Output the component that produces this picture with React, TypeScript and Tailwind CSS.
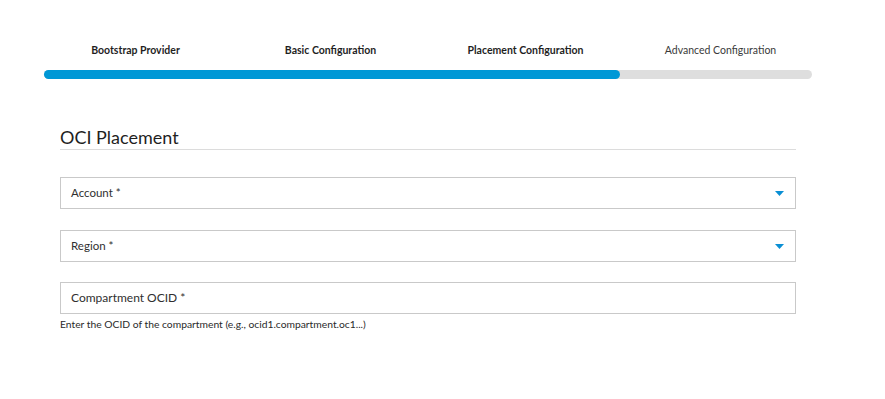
import { useState } from "react";

const steps = [
  { label: "Bootstrap Provider", done: true },
  { label: "Basic Configuration", done: true },
  { label: "Placement Configuration", done: true },
  { label: "Advanced Configuration", done: false },
];

function Caret() {
  return (
    <svg width="9" height="5" viewBox="0 0 9 5" className="shrink-0">
      <path d="M0 0h9L4.5 5z" fill="#0a8fd4" />
    </svg>
  );
}

function SelectField({ label }: { label: string }) {
  return (
    <button
      type="button"
      className="flex h-[32px] w-full items-center justify-between border border-[#c9c9c9] bg-white pl-[10px] pr-[11px] text-left text-[11.5px] text-[#2f2f2f]"
    >
      <span>{label}</span>
      <Caret />
    </button>
  );
}

export default function App() {
  const [ocid, setOcid] = useState("");

  return (
    <div className="min-h-[399px] w-[885px] bg-white font-['Lato','Liberation_Sans',sans-serif] text-[#2a2a2a]">
      <div className="w-[768px] pl-[44px] pt-[43px] box-content">
        <div className="ml-[-6px] grid w-[780px] grid-cols-4 text-center text-[10.5px] leading-[14px]">
          {steps.map((s) => (
            <div
              key={s.label}
              className={s.done ? "font-bold text-[#1f1f1f]" : "text-[#3a3a3a]"}
            >
              {s.label}
            </div>
          ))}
        </div>
        <div className="mt-[13px] h-[9px] w-full rounded-full bg-[#dedede]">
          <div className="h-full w-3/4 rounded-full bg-[#0098d6]" />
        </div>

        <div className="px-4">
          <h2 className="mt-[47px] border-b border-[#dcdcdc] pb-px text-[18px] leading-[22px] text-[#1f1f1f]">
            OCI Placement
          </h2>

          <div className="mt-[27px] flex flex-col gap-[21px]">
            <SelectField label="Account *" />
            <SelectField label="Region *" />
          </div>

          <div className="mt-[20px]">
            <label className="relative block">
              <input
                value={ocid}
                onChange={(e) => setOcid(e.target.value)}
                className="h-[32px] w-full border border-[#c9c9c9] bg-white px-[10px] text-[12px] outline-none"
              />
              {!ocid && (
                <span className="pointer-events-none absolute left-[11px] top-1/2 -translate-y-1/2 text-[12px] text-[#2f2f2f]">
                  Compartment OCID *
                </span>
              )}
            </label>
            <p className="mt-[4px] text-[10.3px] leading-[12px] text-[#2a2a2a]">
              Enter the OCID of the compartment (e.g., ocid1.compartment.oc1...)
            </p>
          </div>
        </div>
      </div>
    </div>
  );
}
